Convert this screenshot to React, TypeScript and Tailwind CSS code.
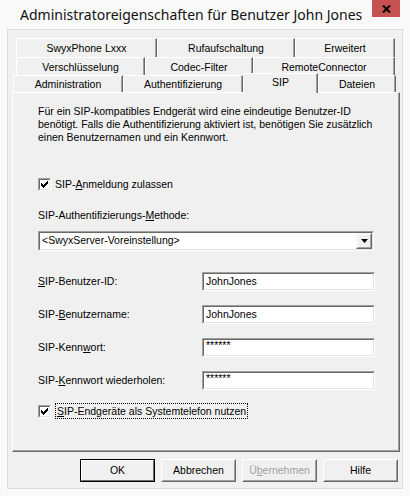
import React from "react";

const sans = "font-['Liberation_Sans',Arial,sans-serif]";

function Sunken({ className, children }: { className?: string; children?: React.ReactNode }) {
  return (
    <div className={`border border-t-[#a0a0a0] border-l-[#a0a0a0] border-r-white border-b-white ${className ?? ""}`}>
      <div className="h-full w-full border border-t-[#696969] border-l-[#696969] border-r-[#e3e3e3] border-b-[#e3e3e3] bg-white">
        {children}
      </div>
    </div>
  );
}

function CheckBox() {
  return (
    <Sunken className="w-[13px] h-[13px] shrink-0">
      <div className="flex h-full w-full items-center justify-center">
        <svg width="7" height="7" viewBox="0 0 7 7" shapeRendering="crispEdges">
          <rect x="0" y="2" width="1" height="3" fill="#000" />
          <rect x="1" y="3" width="1" height="3" fill="#000" />
          <rect x="2" y="4" width="1" height="3" fill="#000" />
          <rect x="3" y="3" width="1" height="3" fill="#000" />
          <rect x="4" y="2" width="1" height="3" fill="#000" />
          <rect x="5" y="1" width="1" height="3" fill="#000" />
          <rect x="6" y="0" width="1" height="3" fill="#000" />
        </svg>
      </div>
    </Sunken>
  );
}

function TextField({ value, secret }: { value: string; secret?: boolean }) {
  return (
    <Sunken className="w-[173px] h-[19px]">
      <div className={`flex h-full items-center pl-[2px] text-[10.5px] text-black ${secret ? "pb-[3px]" : ""}`}>
        {value}
      </div>
    </Sunken>
  );
}

function Button({ label, primary, disabled }: { label: React.ReactNode; primary?: boolean; disabled?: boolean }) {
  return (
    <div className={`w-[75px] h-[23px] border ${primary ? "border-[#000]" : "border-t-white border-l-white border-r-[#696969] border-b-[#696969]"}`}>
      <div
        className={`flex h-full w-full items-center justify-center text-[10.5px] border ${
          primary
            ? "border-t-white border-l-white border-r-[#696969] border-b-[#696969]"
            : "border-t-[#f0f0f0] border-l-[#f0f0f0] border-r-[#a0a0a0] border-b-[#a0a0a0]"
        } ${disabled ? "text-[#a0a0a0]" : "text-black"}`}
      >
        {label}
      </div>
    </div>
  );
}

function Tab({ label, width, selected }: { label: string; width: string; selected?: boolean }) {
  return (
    <div
      className={`${width} flex shrink-0 items-center justify-center border-t border-l border-r border-t-white border-l-white border-r-[#696969] shadow-[inset_-1px_0_0_#a0a0a0] bg-[#f0f0f0] text-[10.5px] text-black ${
        selected ? "relative z-10 -mt-[2px] h-[20px] pb-[1px]" : "h-full pt-[2px]"
      }`}
    >
      {label}
    </div>
  );
}

function FieldRow({ label, value, secret }: { label: React.ReactNode; value: string; secret?: boolean }) {
  return (
    <div className="flex items-center">
      <div className="w-[164px] text-[10.5px] text-black">{label}</div>
      <TextField value={value} secret={secret} />
    </div>
  );
}

export default function App() {
  return (
    <div className={`${sans} relative h-[496px] w-[410px] overflow-hidden bg-[#f9f9f9]`}>
      {/* window caption */}
      <div className="flex h-[29px] items-start">
        <div className="whitespace-nowrap pl-[20px] pt-[6px] font-['Noto_Sans',sans-serif] text-[14px] leading-[18px] text-[#111]">
          Administratoreigenschaften für Benutzer John Jones
        </div>
        <div className="ml-auto mr-[10px] flex h-[17px] w-[28px] shrink-0 items-center justify-center bg-[#c75050]">
          <svg width="9" height="8" viewBox="0 0 9 8">
            <path d="M1 0.5 L8 7.5 M8 0.5 L1 7.5" stroke="#000" strokeWidth="2" />
          </svg>
        </div>
      </div>

      {/* client area */}
      <div className="mx-[7px] h-[460px] border-t border-l border-r border-b border-[#dcdcdc] bg-[#f0f0f0]">
        <div className="pt-[8px]">
          <div className="ml-[8px] flex h-[19px] w-[379px]">
            <Tab label="SwyxPhone Lxxx" width="w-[141px]" />
            <Tab label="Rufaufschaltung" width="w-[138px]" />
            <Tab label="Erweitert" width="w-[100px]" />
          </div>
          <div className="ml-[8px] flex h-[18px] w-[379px]">
            <Tab label="Verschlüsselung" width="w-[129px]" />
            <Tab label="Codec-Filter" width="w-[108px]" />
            <Tab label="RemoteConnector" width="w-[142px]" />
          </div>
          <div className="ml-[5px] flex h-[17px] w-[383px] items-start">
            <Tab label="Administration" width="w-[110px]" />
            <Tab label="Authentifizierung" width="w-[120px]" />
            <Tab label="SIP" width="w-[75px]" selected />
            <Tab label="Dateien" width="w-[78px]" />
          </div>

          {/* tab page */}
          <div className="ml-[4px] h-[360px] w-[388px] border-t border-l border-r border-b border-t-white border-l-white border-r-[#696969] border-b-[#696969] shadow-[inset_-1px_-1px_0_#a0a0a0]">
            <div className="pl-[25px] pt-[12px]">
              <p className="text-[10.5px] leading-[13px] text-black">
                Für ein SIP-kompatibles Endgerät wird eine eindeutige Benutzer-ID
                <br />
                benötigt. Falls die Authentifizierung aktiviert ist, benötigen Sie zusätzlich
                <br />
                einen Benutzernamen und ein Kennwort.
              </p>

              <div className="mt-[34px] flex h-[13px] items-center gap-[4px]">
                <CheckBox />
                <span className="text-[10.5px] text-black">
                  SIP-<span className="underline">A</span>nmeldung zulassen
                </span>
              </div>

              <div className="mt-[18px] text-[10.5px] leading-[13px] text-black">
                SIP-Authentifizierungs-<span className="underline">M</span>ethode:
              </div>

              <Sunken className="mt-[9px] h-[20px] w-[336px]">
                <div className="flex h-full items-center">
                  <span className="flex-1 pl-[2px] text-[10.5px] text-black">&lt;SwyxServer-Voreinstellung&gt;</span>
                  <div className="h-full w-[16px] border border-t-[#f0f0f0] border-l-[#f0f0f0] border-r-[#696969] border-b-[#696969] bg-[#f0f0f0]">
                    <div className="flex h-full w-full items-center justify-center border border-t-white border-l-white border-r-[#a0a0a0] border-b-[#a0a0a0]">
                      <svg width="7" height="4" viewBox="0 0 7 4">
                        <path d="M0 0 H7 L3.5 4 Z" fill="#000" />
                      </svg>
                    </div>
                  </div>
                </div>
              </Sunken>

              <div className="mt-[21px] flex flex-col gap-[14px]">
                <FieldRow label={<><span className="underline">S</span>IP-Benutzer-ID:</>} value="JohnJones" />
                <FieldRow label={<>SIP-<span className="underline">B</span>enutzername:</>} value="JohnJones" />
                <FieldRow label={<>SIP-Kenn<span className="underline">w</span>ort:</>} value="******" secret />
                <FieldRow label={<>SIP-<span className="underline">K</span>ennwort wiederholen:</>} value="******" secret />
              </div>

              <div className="mt-[13px] flex h-[16px] items-center gap-[4px]">
                <CheckBox />
                <span className="border border-dotted border-black px-[1px] text-[10.5px] leading-[14px] text-black">
                  <span className="underline">S</span>IP-Endgeräte als Systemtelefon nutzen
                </span>
              </div>
            </div>
          </div>

          {/* dialog buttons */}
          <div className="mt-[7px] flex justify-end gap-[6px] pr-[4px]">
            <Button label="OK" primary />
            <Button label="Abbrechen" />
            <Button label={<>Ü<span className="underline">b</span>ernehmen</>} disabled />
            <Button label="Hilfe" />
          </div>
        </div>
      </div>
    </div>
  );
}
